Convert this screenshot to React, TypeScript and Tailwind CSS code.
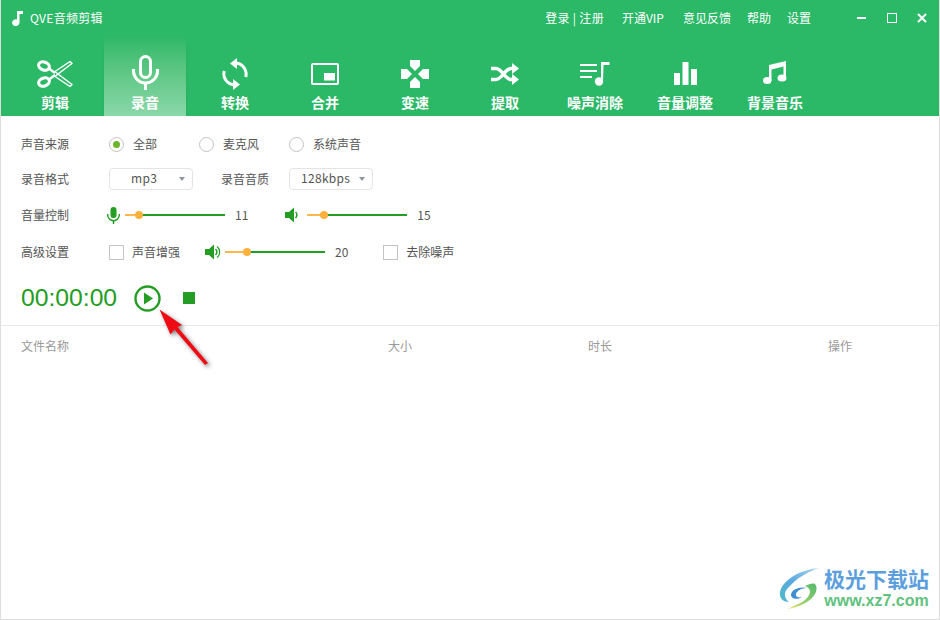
import type { ReactNode } from 'react'

const FONT = '"Noto Sans CJK SC", "Liberation Sans", sans-serif'

type NavItem = { label: string; icon: ReactNode; active?: boolean }

const NAV_ITEMS: NavItem[] = [
  {
    label: '剪辑',
    icon: (
      <svg width="36" height="28" viewBox="0 0 36 28" fill="none" stroke="white">
        <ellipse cx="7" cy="6" rx="5.5" ry="4" transform="rotate(20 7 6)" strokeWidth="3" />
        <ellipse cx="7" cy="22" rx="5.5" ry="4" transform="rotate(-20 7 22)" strokeWidth="3" />
        <path d="M12 8.500 18 13M12 19.500 18 15" strokeWidth="2.500" />
        <path d="M18 11.500 33 1.500 35 3.500 21 14z" strokeWidth="1.500" strokeLinejoin="round" />
        <path d="M18 16.500 33 26.500 35 24.500 21 14z" strokeWidth="1.500" strokeLinejoin="round" />
      </svg>
    ),
  },
  {
    label: '录音',
    active: true,
    icon: (
      <svg className="-mt-[3px]" width="27" height="35" viewBox="0 0 27 35" fill="none" stroke="white" strokeWidth="3">
        <rect x="8.500" y="1.500" width="10" height="21" rx="5" />
        <path d="M1.500 14v2a12 12 0 0 0 24 0v-2" />
        <path d="M13.500 28v7" />
      </svg>
    ),
  },
  {
    label: '转换',
    icon: (
      <svg width="28" height="34" viewBox="0 0 28 34" fill="none">
        <path d="M15 6.100A11 11 0 0 1 24.700 20" stroke="white" strokeWidth="3" />
        <path d="M13 27.900A11 11 0 0 1 3.300 14" stroke="white" strokeWidth="3" />
        <path d="M16 1v11L9 6.500z" fill="white" />
        <path d="M12 22v11l7-5.500z" fill="white" />
      </svg>
    ),
  },
  {
    label: '合并',
    icon: (
      <svg width="28" height="22" viewBox="0 0 28 22" fill="none">
        <rect x="1" y="1" width="26" height="20" rx="1" stroke="white" strokeWidth="2" />
        <rect x="13" y="10" width="11" height="7.500" fill="white" />
      </svg>
    ),
  },
  {
    label: '变速',
    icon: (
      <svg width="28" height="28" viewBox="0 0 28 28" fill="white">
        <path d="M9 0h10v6l-5 5-5-5z" />
        <path d="M9 28h10v-6l-5-5-5 5z" />
        <path d="M0 9v10h6l5-5-5-5z" />
        <path d="M28 9v10h-6l-5-5 5-5z" />
      </svg>
    ),
  },
  {
    label: '提取',
    icon: (
      <svg width="28" height="22" viewBox="0 0 28 22" fill="none">
        <path d="M0 5.500h5c6 0 9 11 15 11h2M0 16.500h5c6 0 9-11 15-11h2" stroke="white" strokeWidth="3.500" />
        <path d="M21 0l7 5.500-7 5.500zM21 11l7 5.500-7 5.500z" fill="white" />
      </svg>
    ),
  },
  {
    label: '噪声消除',
    icon: (
      <svg width="30" height="25" viewBox="0 0 30 25" fill="white">
        <rect x="0" y="3" width="17" height="2" />
        <rect x="0" y="9" width="17" height="2" />
        <rect x="0" y="15" width="12" height="2" />
        <path d="M21 1h8.500v3H23.500l-.5 16h-2z" />
        <circle cx="19" cy="20.500" r="4.200" />
      </svg>
    ),
  },
  {
    label: '音量调整',
    icon: (
      <svg width="23" height="23" viewBox="0 0 23 23" fill="white">
        <rect x="0" y="11" width="6" height="12" />
        <rect x="8.500" y="0" width="6" height="23" />
        <rect x="17" y="7" width="6" height="16" />
      </svg>
    ),
  },
  {
    label: '背景音乐',
    icon: (
      <svg className="-mt-[2px]" width="24" height="23" viewBox="0 0 24 23" fill="white">
        <path d="M6 4 23 0v17h-2.500V5.500L8.500 8.500V20H6z" />
        <ellipse cx="4.200" cy="19.500" rx="4.200" ry="3.500" />
        <ellipse cx="19" cy="17" rx="4.500" ry="3.500" />
      </svg>
    ),
  },
]

const Mic = () => (
  <svg width="13" height="17" viewBox="0 0 13 17" fill="none" stroke="#239d23">
    <rect x="3.500" y="0" width="6" height="11" rx="3" fill="#239d23" stroke="none" />
    <path d="M.7 7v1a5.800 5.800 0 0 0 11.600 0V7" strokeWidth="1.400" />
    <path d="M6.500 14v3" strokeWidth="1.500" />
  </svg>
)

const Speaker = ({ wave }: { wave?: boolean }) => (
  <svg width="16" height="16" viewBox="0 0 16 16" fill="#239d23">
    <path d="M0 5h4l5-4.500v15L4 11H0z" />
    <path d="M10.500 5a4 4 0 0 1 0 6" fill="none" stroke="#239d23" strokeWidth="1.500" />
    {wave ? <path d="M12 2.500a7 7 0 0 1 0 11" fill="none" stroke="#239d23" strokeWidth="1.200" /> : null}
  </svg>
)

function Slider({ thumb, value }: { thumb: number; value: number }) {
  return (
    <div className="flex items-center">
      <div className="relative h-[2px] w-[100px] bg-[#239d23]">
        <div className="h-[2px] bg-[#ffb64d]" style={{ width: thumb }} />
        <div
          className="absolute top-[-3px] h-2 w-2 rounded-full bg-[#ffb13d]"
          style={{ left: thumb - 4 }}
        />
      </div>
      <span className="ml-[10px] text-xs text-[#555]">{value}</span>
    </div>
  )
}

function Radio({ label, checked }: { label: string; checked?: boolean }) {
  return (
    <div className="flex w-[90px] items-center">
      <span className="flex h-[15px] w-[15px] items-center justify-center rounded-full border border-[#c4c4c4] bg-white">
        {checked ? <span className="h-[7px] w-[7px] rounded-full bg-[#6cb52d]" /> : null}
      </span>
      <span className="ml-[9px]">{label}</span>
    </div>
  )
}

function Checkbox({ label }: { label: string }) {
  return (
    <div className="flex items-center">
      <span className="h-[15px] w-[15px] border border-[#c4c4c4] bg-white" />
      <span className="ml-2">{label}</span>
    </div>
  )
}

function Select({ value, pad }: { value: string; pad: string }) {
  return (
    <div className={`flex h-[22px] w-[84px] items-center justify-between rounded-sm border border-[#e4e4e4] pr-[7px] ${pad}`}>
      <span className="-mt-[2px] tracking-[0.3px] text-[#555]">{value}</span>
      <span className="h-0 w-0 border-x-[3.500px] border-t-[4px] border-x-transparent border-t-[#8f979e]" />
    </div>
  )
}

export default function App() {
  return (
    <div
      className="relative h-[620px] w-[940px] overflow-hidden border-x border-b border-[#dedede] bg-white text-xs text-[#555]"
      style={{ fontFamily: FONT }}
    >
      <header className="-mx-px h-[116px] overflow-hidden bg-[#2bb867] text-white">
        <div className="flex h-[36px] items-center pl-[12px]">
          <svg width="11" height="15" viewBox="0 0 11 15" fill="white">
            <path d="M5 0h6v3H7.500v8.500a3.700 3.400 0 1 1-2.500-3.100z" />
          </svg>
          <span className="ml-[7px] tracking-[0.3px]">QVE音频剪辑</span>
          <div className="ml-auto flex items-center">
            <span className="tracking-[0.3px]">登录 | 注册</span>
            <span className="ml-[18px]">开通VIP</span>
            <span className="ml-[19px]">意见反馈</span>
            <span className="ml-[16px]">帮助</span>
            <span className="ml-[16px]">设置</span>
            <div className="ml-[46px] mr-[13px] flex items-center">
              <span className="h-[2px] w-[9px] bg-white" />
              <span className="ml-[21px] h-[10px] w-[10px] border-[1.500px] border-white" />
              <svg className="ml-[20px]" width="10" height="10" viewBox="0 0 10 10" stroke="white" strokeWidth="2">
                <path d="M1 1l8 8M9 1l-8 8" />
              </svg>
            </div>
          </div>
        </div>
        <nav className="flex h-[80px] pl-[10px]">
          {NAV_ITEMS.map((item) => (
            <div key={item.label} className="flex h-full w-[90px] justify-center">
              <div
                className={`flex h-full flex-col items-center ${
                  item.active
                    ? 'w-[82px] bg-gradient-to-b from-[#2bb867] to-[#8ad8a8] shadow-[0_8px_4px_-2px_rgba(20,120,60,0.35)]'
                    : 'w-full'
                }`}
              >
                <div className="flex h-[56px] w-full items-center justify-center pt-[19px]">{item.icon}</div>
                <span className="text-sm leading-[20px] font-bold">{item.label}</span>
              </div>
            </div>
          ))}
        </nav>
      </header>

      <section className="pt-[10px] pl-5">
        <div className="flex h-[36px] items-center">
          <span className="w-[88px]">声音来源</span>
          <Radio label="全部" checked />
          <Radio label="麦克风" />
          <Radio label="系统声音" />
        </div>
        <div className="flex h-[34px] items-center">
          <span className="w-[88px]">录音格式</span>
          <Select value="mp3" pad="pl-[21px]" />
          <span className="ml-7 w-[68px]">录音音质</span>
          <Select value="128kbps" pad="pl-[11px]" />
        </div>
        <div className="flex h-[38px] items-center">
          <span className="w-[86px]">音量控制</span>
          <span className="w-[18px]"><Mic /></span>
          <Slider thumb={14} value={11} />
          <span className="ml-[37px] w-[22px]"><Speaker /></span>
          <Slider thumb={17} value={15} />
        </div>
        <div className="flex h-[36px] items-center">
          <span className="w-[88px]">高级设置</span>
          <div className="w-[96px]"><Checkbox label="声音增强" /></div>
          <span className="w-5"><Speaker wave /></span>
          <Slider thumb={22} value={20} />
          <div className="ml-[35px]"><Checkbox label="去除噪声" /></div>
        </div>
      </section>

      <section className="flex h-[55px] items-center pt-[1px] pl-5">
        <span className="w-[113px] font-['Liberation_Sans',sans-serif] text-[24.700px] text-[#239d23]">00:00:00</span>
        <svg width="27" height="27" viewBox="0 0 27 27" fill="none">
          <circle cx="13.500" cy="13.500" r="12" stroke="#239d23" strokeWidth="2.400" />
          <path d="M10 7.500 19 13.500 10 19.500z" fill="#239d23" />
        </svg>
        <span className="ml-[22px] h-3 w-3 bg-[#239d23]" />
      </section>

      <section className="flex h-[40px] items-center border-t border-[#e8e8e8] pl-5 text-[#999]">
        <span className="w-[367px]">文件名称</span>
        <span className="w-[200px]">大小</span>
        <span className="w-[240px]">时长</span>
        <span>操作</span>
      </section>

      {/* annotation arrow, sits over the list header */}
      <svg
        className="absolute left-[149px] top-[300px] drop-shadow-[2px_2px_2px_rgba(0,0,0,0.5)]"
        width="70"
        height="75"
        viewBox="0 0 70 75"
      >
        <path d="M9.500 9.500 32 25 27.500 27 58 63 55 65 24.500 29.500 20.500 34.500z" fill="#f00a14" />
      </svg>

      <div className="absolute right-[10px] bottom-[7px] flex items-center">
        <svg width="50" height="50" viewBox="0 0 50 50" fill="none">
          <defs>
            <linearGradient id="swooshBlue" x1="40" y1="6" x2="3" y2="36" gradientUnits="userSpaceOnUse">
              <stop offset="0" stopColor="#a8d4f0" />
              <stop offset="0.6" stopColor="#5aa9e0" />
              <stop offset="1" stopColor="#4fb8c8" />
            </linearGradient>
            <linearGradient id="swooshGreen" x1="38" y1="22" x2="10" y2="47" gradientUnits="userSpaceOnUse">
              <stop offset="0" stopColor="#58b96e" />
              <stop offset="0.6" stopColor="#9ed36a" />
              <stop offset="1" stopColor="#f0e46a" />
            </linearGradient>
          </defs>
          <path d="M42 6C22 8 6 18 3 30c-1 6 3 10 9 10-5-4-6-10 0-15C20 16 30 10 42 6z" fill="url(#swooshBlue)" />
          <path d="M14 33c0-6 10-9 16-7-4 0-10 2-11 6-1 3 3 4 6 3-4 3-11 2-11-2z" fill="#3d8fd1" />
          <path d="M38 22c6 8-6 22-28 25 12-5 22-9 23-17 0-3-2-5-5-6 4-2 8-3 10-2z" fill="url(#swooshGreen)" />
        </svg>
        <div className="-ml-[3px] flex w-[105px] flex-col items-center">
          <span className="text-[21px] leading-[26px] font-bold text-[#5c9fdc]">极光下载站</span>
          <span className="font-['Liberation_Sans',sans-serif] text-base leading-[19px] font-bold text-[#5fc27e]">www.xz7.com</span>
        </div>
      </div>
    </div>
  )
}
